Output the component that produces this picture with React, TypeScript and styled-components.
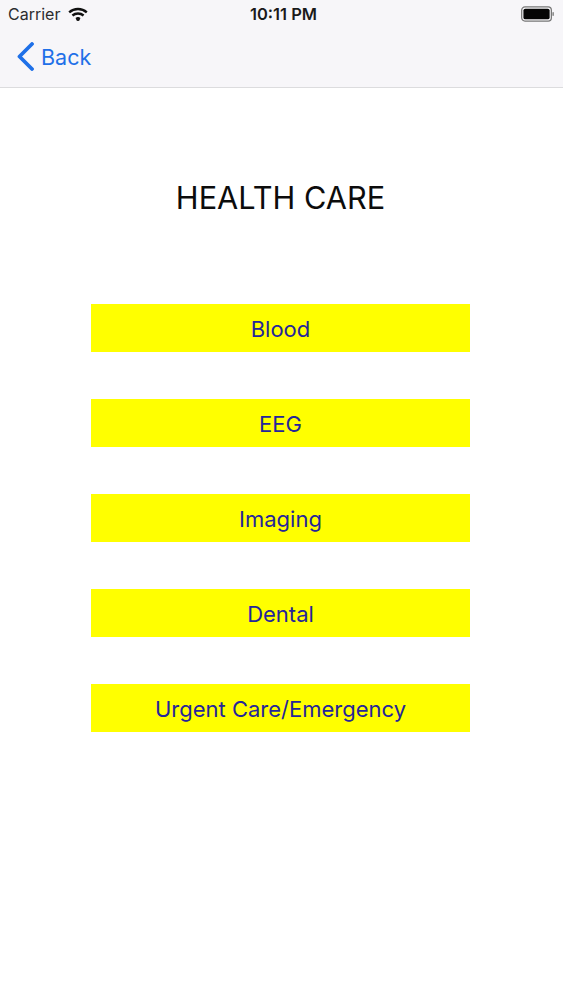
import React from "react";
import styled, { createGlobalStyle } from "styled-components";

const Global = createGlobalStyle`
  html, body { margin: 0; padding: 0; background: #fff; }
  body { font-family: Inter, "Liberation Sans", sans-serif; }
`;

const Page = styled.div`
  width: 563px;
  height: 1000px;
  display: flex;
  flex-direction: column;
  overflow: hidden;
  background: #fff;
`;

const Header = styled.header`
  height: 88px;
  box-sizing: border-box;
  background: #f7f6f9;
  border-bottom: 1px solid #dcdcde;
  display: flex;
  flex-direction: column;
`;

const StatusBar = styled.div`
  height: 28px;
  padding: 0 9px 0 8px;
  display: grid;
  grid-template-columns: 1fr auto 1fr;
  align-items: center;
  color: #111;
`;

const Carrier = styled.div`
  display: flex;
  align-items: center;
  gap: 8px;
  font-size: 16px;
  color: #2c2c2e;
`;

const Clock = styled.div`
  padding-left: 5px;
  font-size: 16.5px;
  font-weight: 600;
  color: #1a1a1a;
`;

const Battery = styled.svg`
  justify-self: end;
`;

const NavBar = styled.div`
  flex: 1;
  display: flex;
  align-items: center;
  gap: 7px;
  padding: 0 0 2px 17px;
  color: #1f70e8;
  font-size: 21.5px;
`;

const Main = styled.main`
  flex: 1;
  padding-right: 2px;
  display: flex;
  flex-direction: column;
  align-items: center;
`;

const Title = styled.h1`
  margin: 91px 0 0;
  height: 38px;
  line-height: 38px;
  font-size: 30.7px;
  font-weight: 400;
  color: #0c0c0c;
`;

const Menu = styled.nav`
  margin-top: 87px;
  display: flex;
  flex-direction: column;
  gap: 47px;
`;

const MenuButton = styled.div`
  width: 379.5px;
  height: 48px;
  box-sizing: border-box;
  padding-top: 1px;
  background: #ffff00;
  color: #25259a;
  font-size: 22px;
  display: flex;
  align-items: center;
  justify-content: center;
`;

const items = ["Blood", "EEG", "Imaging", "Dental", "Urgent Care/Emergency"];

export default function App() {
  return (
    <Page>
      <Global />
      <Header>
        <StatusBar>
          <Carrier>
            Carrier
            <svg width="20" height="15" viewBox="0 0 20 15" fill="none" stroke="#111" strokeWidth="2.4">
              <path d="M1.2 5.4C6.2.9 13.8.9 18.8 5.4" />
              <path d="M4.4 8.5c3.2-2.7 8-2.7 11.2 0" />
              <circle cx="10" cy="12" r="1.9" fill="#111" stroke="none" />
              <path d="M7.4 10.9c1.6-1 3.6-1 5.2 0L10 14z" fill="#111" stroke="none" />
            </svg>
          </Carrier>
          <Clock>10:11 PM</Clock>
          <Battery width="33" height="16" viewBox="0 0 34 16">
            <rect x="0.7" y="0.7" width="30.6" height="14.6" rx="3.4" fill="none" stroke="#777" strokeWidth="1.3" />
            <rect x="2.5" y="2.5" width="27" height="11" rx="2" fill="#050505" />
            <rect x="32.4" y="6" width="1.4" height="4" rx="0.7" fill="#777" />
          </Battery>
        </StatusBar>
        <NavBar>
          <svg width="17" height="29" viewBox="0 0 17 29" fill="none" stroke="#1f70e8" strokeWidth="3.8" strokeLinecap="round" strokeLinejoin="round">
            <path d="M15 2 2.5 14.5 15 27" />
          </svg>
          Back
        </NavBar>
      </Header>
      <Main>
        <Title>HEALTH CARE</Title>
        <Menu>
          {items.map((item) => (
            <MenuButton key={item}>{item}</MenuButton>
          ))}
        </Menu>
      </Main>
    </Page>
  );
}
